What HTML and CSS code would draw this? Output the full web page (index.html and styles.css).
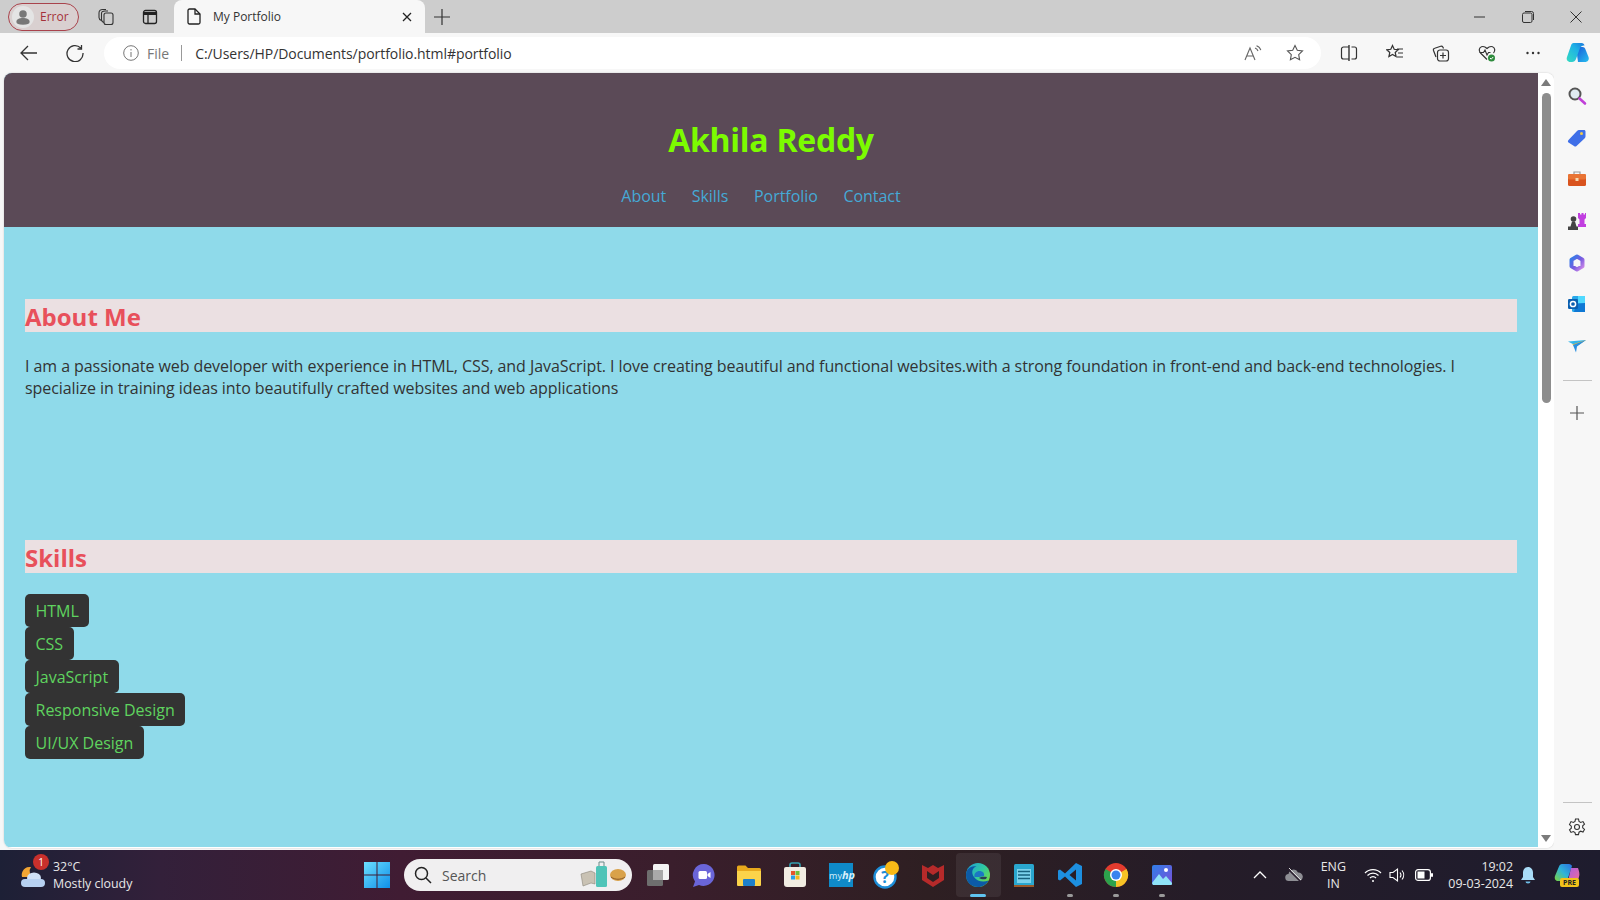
FILE: index.html
```html
<!DOCTYPE html>
<html lang="en">
<head>
<meta charset="utf-8">
<title>My Portfolio</title>
<link rel="stylesheet" href="styles.css">
</head>
<body>
<div class="tabbar">
  <div class="profile">
    <svg width="22" height="22" viewBox="0 0 20 20"><circle cx="10" cy="10" r="10" fill="#e4e4e4"/><circle cx="10" cy="7.200" r="3.400" fill="#777"/><path d="M4 14.500c0-2.500 2.500-3.500 6-3.500s6 1 6 3.500c0 1.500-2 2.500-6 2.500s-6-1-6-2.500z" fill="#777"/></svg>
    <span>Error</span>
  </div>
  <div class="tabicon first"><svg width="18" height="18" viewBox="0 0 18 18" fill="none" stroke="#333" stroke-width="1.100"><rect x="7" y="5" width="9" height="11.500" rx="2"/><path d="M7 14.500c-1.500-.5-2.500-1.500-2.500-3V5.500C4.500 4 6 3 8 3h3M4.500 12.500C3 12 2 11 2 9.500V5c0-2 1.500-3.500 3.500-3.500H9"/></svg></div>
  <div class="tabicon"><svg width="16" height="16" viewBox="0 0 16 16" fill="none" stroke="#222" stroke-width="1.300"><rect x="1.500" y="1.500" width="13" height="13" rx="2"/><path d="M1.500 4.500h13" stroke-width="3"/><path d="M6 5v9"/></svg></div>
  <div class="tab">
    <svg width="14" height="17" viewBox="0 0 14 17" fill="none" stroke="#222" stroke-width="1.300"><path d="M2.500 1h5.500l5 5v8.500a1.500 1.500 0 0 1-1.500 1.500h-9A1.500 1.500 0 0 1 1 14.500v-12A1.500 1.500 0 0 1 2.500 1z"/><path d="M8 1v5h5"/></svg>
    <span class="tabtitle">My Portfolio</span>
    <svg width="10" height="10" viewBox="0 0 10 10" stroke="#222" stroke-width="1.300"><path d="M1 1l8 8M9 1l-8 8"/></svg>
  </div>
  <div class="newtab"><svg width="16" height="16" viewBox="0 0 16 16" stroke="#333" stroke-width="1.200"><path d="M8 0v16M0 8h16"/></svg></div>
  <div class="wincontrols">
    <svg width="12" height="12" viewBox="0 0 12 12" stroke="#333"><path d="M0 6h11"/></svg>
    <svg width="12" height="12" viewBox="0 0 12 12" fill="none" stroke="#333"><rect x=".5" y="2" width="9.500" height="9.500" rx="1.500"/><path d="M3 .5h6.500a2 2 0 0 1 2 2V9"/></svg>
    <svg width="12" height="12" viewBox="0 0 12 12" stroke="#333"><path d="M.5.500l11 11M11.500.500l-11 11"/></svg>
  </div>
</div>

<div class="toolbar">
  <div class="navicon first"><svg width="18" height="16" viewBox="0 0 18 16" fill="none" stroke="#333" stroke-width="1.300"><path d="M17 8H1M8 1L1 8l7 7"/></svg></div>
  <div class="navicon"><svg width="18" height="18" viewBox="0 0 18 18" fill="none" stroke="#333" stroke-width="1.300"><path d="M14.700 4A8 8 0 1 0 17 9M15.500 1v4h-4"/></svg></div>
  <div class="address">
    <svg width="16" height="16" viewBox="0 0 16 16" fill="none" stroke="#777"><circle cx="8" cy="8" r="7.300"/><path d="M8 7v5M8 4v1.500"/></svg>
    <span class="filelabel">File</span>
    <span class="sep"></span>
    <span class="url">C:/Users/HP/Documents/portfolio.html#portfolio</span>
    <span class="addr-right">
      <svg width="18" height="16" viewBox="0 0 18 16" fill="none" stroke="#666" stroke-width="1.100"><path d="M1 15L6 3l5 12M2.800 11h6.500M11 3c1.500.5 2.500 1.500 3 3M12.500.800c2 .7 3.700 2.300 4.300 4.400"/></svg>
      <svg width="18" height="18" viewBox="0 0 18 18" fill="none" stroke="#555" stroke-width="1.100"><path d="M9 1.500l2.300 4.800 5.200.7-3.800 3.600.9 5.200L9 13.300l-4.600 2.500.9-5.200L1.500 7l5.200-.7z"/></svg>
    </span>
  </div>
  <div class="toolicons">
    <svg width="18" height="18" viewBox="0 0 18 18" fill="none" stroke="#333" stroke-width="1.200"><path d="M9 3H3.500a2 2 0 0 0-2 2v8a2 2 0 0 0 2 2H9M11.500 3h3a2 2 0 0 1 2 2v8a2 2 0 0 1-2 2h-3"/><path d="M9 1v16" stroke-width="1.400"/></svg>
    <svg width="18" height="18" viewBox="0 0 18 18" fill="none" stroke="#333" stroke-width="1.200"><path d="M6.500 1.500l1.700 3.800 4 .5-3 2.700.9 4.100-3.600-2.100-3.600 2.100.9-4.100-3-2.700 4-.5zM11 5h6M12 9h5M11 13h6"/></svg>
    <svg width="18" height="18" viewBox="0 0 18 18" fill="none" stroke="#333" stroke-width="1.200"><path d="M4 13L1.500 6.500c-.3-1 .2-2 1.200-2.300l6-2c1-.3 1.800.2 2.300 1l.5 1.300"/><rect x="5.500" y="6" width="11" height="11" rx="2.500"/><path d="M11 8.500v6M8 11.500h6"/></svg>
    <svg width="18" height="18" viewBox="0 0 18 18" fill="none"><path d="M9 15.500L2.500 9C.5 7 1 3.500 3.500 2.700 5.800 2 7.500 3 9 4.500 10.500 3 12.200 2 14.500 2.700 17 3.500 17.500 7 15.500 9" stroke="#333" stroke-width="1.200"/><path d="M1.500 8.500h4l1.500-2.500 2 5 1.500-2.500h2" stroke="#333" stroke-width="1.100"/><circle cx="13.500" cy="14" r="3.500" fill="#2e8b3d"/><path d="M12 14l1.200 1.200 2-2.200" stroke="#fff"/></svg>
    <svg width="18" height="18" viewBox="0 0 18 18" fill="#333"><circle cx="3.500" cy="9" r="1.200"/><circle cx="9" cy="9" r="1.200"/><circle cx="14.500" cy="9" r="1.200"/></svg>
    <svg width="26" height="26" viewBox="0 0 26 26"><defs><linearGradient id="cp1" x1="0" y1="1" x2="1" y2="0"><stop offset="0" stop-color="#35dcc0"/><stop offset=".6" stop-color="#1fb2e6"/><stop offset="1" stop-color="#1a78dd"/></linearGradient><linearGradient id="cp2" x1="0" y1="0" x2="1" y2="1"><stop offset="0" stop-color="#1858d8"/><stop offset="1" stop-color="#28c0f0"/></linearGradient></defs><path d="M11 7h6.500c1.500 0 2.300.8 2.800 2l3.200 8c1 2.700-.8 5-3.500 5H13z" fill="url(#cp2)"/><path d="M8.500 3h8c1.700 0 2.700 1 3 2.500-1.800-.3-3.800.5-4.500 2.500l-4 11c-.7 2-2.200 3-4 3H5.500C2.500 22 1 19.500 2 17L6 5.500C6.400 4 7.300 3 8.500 3z" fill="url(#cp1)"/></svg>
  </div>
</div>

<div class="workspace">
  <div class="viewport">
    <div class="page">
      <header class="site-header">
        <h1>Akhila Reddy</h1>
        <nav class="site-nav">
          <a>About</a><a>Skills</a><a>Portfolio</a><a>Contact</a>
        </nav>
      </header>
      <section class="about">
        <h2>About Me</h2>
        <p>I am a passionate web developer with experience in HTML, CSS, and JavaScript. I love creating beautiful and functional websites.with a strong foundation in front-end and back-end technologies. I specialize in training ideas into beautifully crafted websites and web applications</p>
      </section>
      <section class="skills">
        <h2>Skills</h2>
        <ul>
          <li>HTML</li>
          <li>CSS</li>
          <li>JavaScript</li>
          <li>Responsive Design</li>
          <li>UI/UX Design</li>
        </ul>
      </section>
    </div>
    <div class="scrollbar">
      <div class="arrow up"></div>
      <div class="track"><div class="thumb"></div></div>
      <div class="arrow down"></div>
    </div>
  </div>
  <aside class="sidebar">
    <svg width="20" height="20" viewBox="0 0 20 20" fill="none"><circle cx="8" cy="8" r="5.500" stroke="#555" stroke-width="2" fill="#dfeaf2"/><path d="M12.500 12.500l5.500 5" stroke="#c03fd8" stroke-width="2.600" stroke-linecap="round"/></svg>
    <svg width="20" height="20" viewBox="0 0 20 20"><path d="M1.500 12L10 3c.7-.7 1.300-1 2-1h5c1 0 1.500.6 1.500 1.500v5c0 .8-.3 1.300-1 2l-8 7.500c-.8.700-1.700.700-2.500 0l-5.500-3.500c-.8-.6-.8-1.700 0-2.500z" fill="#3f6fe8"/><circle cx="14.500" cy="5.500" r="1.500" fill="#f0c94a"/></svg>
    <svg width="20" height="20" viewBox="0 0 20 20"><path d="M7 5V3h6v2" fill="none" stroke="#999" stroke-width="1.200"/><rect x="1" y="5" width="18" height="12" rx="1.500" fill="#d9531e"/><rect x="1" y="5" width="18" height="5.500" rx="1.500" fill="#e97434"/><rect x="8.500" y="9" width="3" height="3" fill="#f5d9b0"/></svg>
    <svg width="20" height="20" viewBox="0 0 20 20"><path d="M11 2h2v1.500h1.500V2h2v1.500H18V2h1v5l-1.500 1.500V13H19v3h-8v-3h1.500V8.500L11 7z" fill="#c13fe0"/><circle cx="6.500" cy="8" r="2.800" fill="#444"/><path d="M5 10.500h3l1.500 5H11V19H1v-3.500h2.500z" fill="#444"/></svg>
    <svg width="20" height="20" viewBox="0 0 20 20" fill="none"><defs><linearGradient id="m1" x1="0" y1="0" x2="1" y2="1"><stop offset="0" stop-color="#2f7fe8"/><stop offset=".55" stop-color="#7a5be0"/><stop offset="1" stop-color="#d08ae8"/></linearGradient></defs><path d="M10 3.500l5.500 3.200v6.600L10 16.500l-5.500-3.200V6.700z" stroke="url(#m1)" stroke-width="4" stroke-linejoin="round"/></svg>
    <svg width="20" height="20" viewBox="0 0 20 20"><rect x="5" y="2" width="13" height="16" rx="1.500" fill="#28a8ea"/><rect x="11" y="2" width="7" height="7" fill="#50d9ff"/><path d="M9 10l9-1v9H7z" fill="#0f78d4"/><rect x="1" y="5" width="10" height="10" rx="1.200" fill="#0a5fb0"/><circle cx="6" cy="10" r="2.600" fill="none" stroke="#fff" stroke-width="1.500"/></svg>
    <svg width="20" height="20" viewBox="0 0 20 20"><path d="M1 5.500l18-1.500-9.500 6z" fill="#34b6ea"/><path d="M5 8.500L19 4 9 10.500z" fill="#e8b93f"/><path d="M6 9l13-5-9 6.500-1 6z" fill="#2a8fe0"/></svg>
    <div class="side-rule top"></div>
    <svg class="side-plus" width="14" height="14" viewBox="0 0 14 14" stroke="#555" stroke-width="1.200"><path d="M7 0v14M0 7h14"/></svg>
    <div class="side-rule bottom"></div>
    <svg class="side-gear" width="18" height="18" viewBox="0 0 18 18" fill="none" stroke="#333" stroke-width="1.100"><circle cx="9" cy="9" r="2.500"/><path d="M7.500 1h3l.5 2.400 1.700 1 2.300-.8 1.500 2.600-1.800 1.600v2l1.800 1.600-1.500 2.600-2.300-.8-1.700 1-.5 2.400h-3L7 14.600l-1.700-1-2.300.8-1.500-2.600 1.800-1.600v-2L1.500 6.600 3 3.600l2.300.8 1.700-1z"/></svg>
  </aside>
</div>

<footer class="taskbar">
  <div class="weather">
    <svg width="30" height="30" viewBox="0 0 30 30"><path d="M4 17a8 8 0 0 1 9-10 7 7 0 0 0 2 10z" fill="#f2a533"/><ellipse cx="16" cy="18" rx="7" ry="5.500" fill="#cfe0f7"/><rect x="3" y="19" width="24" height="8" rx="4" fill="#b7d1f2"/></svg>
    <span class="weather-badge">1</span>
    <div class="weather-text"><span>32°C</span><span>Mostly cloudy</span></div>
  </div>
  <div class="winstart"><svg width="26" height="26" viewBox="0 0 26 26"><defs><linearGradient id="w1" x1="0" y1="0" x2="1" y2="1"><stop offset="0" stop-color="#6ce0ff"/><stop offset="1" stop-color="#0f8fe8"/></linearGradient></defs><path d="M0 0h12.500v12.500H0zM13.500 0H26v12.500H13.500zM0 13.500h12.500V26H0zM13.500 13.500H26V26H13.500z" fill="url(#w1)"/></svg></div>
  <div class="searchbox">
    <svg width="18" height="18" viewBox="0 0 18 18" fill="none" stroke="#222" stroke-width="1.500"><circle cx="7.500" cy="7.500" r="6"/><path d="M12 12l5 5"/></svg>
    <span>Search</span>
    <span class="search-art">
      <svg width="48" height="30" viewBox="0 0 48 30"><path d="M1 14l10-3 4 2v11l-4-1-8 3z" fill="#c9c2b4" stroke="#8a8478" stroke-width=".6"/><rect x="16" y="6" width="11" height="21" rx="1.500" fill="#4fc4b8"/><path d="M19 6V2h5v4" fill="none" stroke="#6a8a88"/><ellipse cx="38" cy="15" rx="8" ry="6" fill="#d9a24a"/><path d="M31 17c4 3 10 3 14 0" stroke="#8a5a2a" fill="none"/></svg>
    </span>
  </div>
  <div class="apps">
    <div class="app"><svg width="24" height="24" viewBox="0 0 24 24"><rect x="7" y="1" width="16" height="16" rx="1.500" fill="#f3f3f3"/><rect x="1" y="7" width="16" height="16" rx="1.500" fill="#6e6e6e"/><rect x="7" y="7" width="10" height="10" fill="#a9a9a9"/></svg></div>
    <div class="app"><svg width="24" height="26" viewBox="0 0 24 26"><path d="M12 2a11 11 0 1 1-5 21l-6 2 2-5.500A11 11 0 0 1 12 2z" fill="#6a65d8"/><rect x="6.500" y="9" width="8.500" height="8" rx="1.500" fill="#fff"/><path d="M15.500 12l3-2v6l-3-2z" fill="#fff"/></svg></div>
    <div class="app"><svg width="26" height="24" viewBox="0 0 26 24"><path d="M1 4a1.500 1.500 0 0 1 1.500-1.500h7l2.500 2.500h11.500A1.500 1.500 0 0 1 25 6.500V22H1z" fill="#e8a91c"/><path d="M1 8h24v14a1 1 0 0 1-1 1H2a1 1 0 0 1-1-1z" fill="#fbd34a"/><rect x="7" y="16" width="12" height="7" rx="1" fill="#1d7fc9"/></svg></div>
    <div class="app"><svg width="24" height="26" viewBox="0 0 24 26"><path d="M7 6V3a2 2 0 0 1 2-2h6a2 2 0 0 1 2 2v3" fill="none" stroke="#33a0b0" stroke-width="1.600"/><path d="M1 7a2 2 0 0 1 2-2h18a2 2 0 0 1 2 2v15a3 3 0 0 1-3 3H4a3 3 0 0 1-3-3z" fill="#f1ece2"/><rect x="8" y="9" width="4" height="4" fill="#e8532a"/><rect x="12.500" y="9" width="4" height="4" fill="#6fbf3a"/><rect x="8" y="13.500" width="4" height="4" fill="#2a9fe8"/><rect x="12.500" y="13.500" width="4" height="4" fill="#f5b81e"/></svg></div>
    <div class="app"><div class="myhp">my<i>hp</i></div></div>
    <div class="app"><svg width="30" height="30" viewBox="0 0 30 30"><circle cx="13" cy="17" r="10.500" fill="#fff" stroke="#1d8ed8" stroke-width="2.400"/><text x="13" y="23" class="helpmark">?</text><circle cx="20" cy="8" r="7" fill="#f7b917"/></svg></div>
    <div class="app"><svg width="24" height="26" viewBox="0 0 24 26"><path d="M1 3l6 3 5-3 5 3 6-3v15l-11 7L1 18zM6 9v7l6 4 6-4V9l-6 4z" fill="#b62a2a" fill-rule="evenodd"/></svg></div>
    <div class="app active"><svg width="26" height="26" viewBox="0 0 26 26"><defs><linearGradient id="e1" x1="0" y1="0" x2="1" y2=".8"><stop offset="0" stop-color="#1f9ed8"/><stop offset=".55" stop-color="#2fc9a0"/><stop offset="1" stop-color="#7bdc3a"/></linearGradient></defs><circle cx="13" cy="13" r="12" fill="url(#e1)"/><path d="M1 13C1 7 6 3 11.500 4.500 7 5.500 6 11 9 15c3 4.500 9.500 5.500 14.500 3.500C21.500 22.500 17.500 25 13 25 6 25 1 20 1 13z" fill="#0c5aa6"/><path d="M9.500 15c-1-4 2.500-6.500 6-6 3 .5 4 2.500 3.500 5-3 1-7 1-9.500 1z" fill="#1c76c4"/><path d="M14 16c2-1.500 5-1.500 8-1l-1 2c-2 .5-5 .5-7-1z" fill="#2a3f52"/></svg><span class="running wide"></span></div>
    <div class="app"><svg width="22" height="26" viewBox="0 0 22 26"><rect x="1" y="2" width="20" height="23" rx="1.500" fill="#2aa7cf"/><rect x="1" y="23" width="20" height="2" fill="#9a5a2a"/><rect x="4" y="7" width="14" height="14" fill="#7bd2ec"/><path d="M5 9.500h12M5 13h12M5 16.500h12" stroke="#16627e" stroke-width="1.400"/></svg></div>
    <div class="app"><svg width="26" height="26" viewBox="0 0 26 26"><path d="M19 1l6 3v18l-6 3L8 14.500 3 18.500 1 17.500v-9L3 7.500l5 4zM19 7.500L12.500 13l6.500 5.500z" fill="#1d8fe0" fill-rule="evenodd"/></svg><span class="running"></span></div>
    <div class="app"><svg width="26" height="26" viewBox="0 0 26 26"><circle cx="13" cy="13" r="12" fill="#e33b2e"/><path d="M13 13L23.500 7A12 12 0 0 1 13 25z" fill="#f7c325"/><path d="M13 13L13 25A12 12 0 0 1 2.500 7z" fill="#2ca24c"/><circle cx="13" cy="13" r="6" fill="#fff"/><circle cx="13" cy="13" r="4.500" fill="#3a83ee"/></svg><span class="running"></span></div>
    <div class="app"><svg width="24" height="24" viewBox="0 0 24 24"><defs><linearGradient id="p1" x1="0" y1="0" x2="1" y2="1"><stop offset="0" stop-color="#2f7fe8"/><stop offset="1" stop-color="#7a4fd8"/></linearGradient></defs><rect x="2" y="2" width="20" height="20" rx="2" fill="url(#p1)"/><path d="M2 20l7-9 4 5 3-3 6 7v1a1 1 0 0 1-1 1H3z" fill="#8fe3f7"/><circle cx="16" cy="7" r="2" fill="#fff"/></svg><span class="running"></span></div>
  </div>
  <div class="tray">
    <svg width="14" height="14" viewBox="0 0 14 14" fill="none" stroke="#fff" stroke-width="1.300"><path d="M1 10l6-6 6 6"/></svg>
    <svg class="tray-cloud" width="18" height="14" viewBox="0 0 18 14"><path d="M4 13a3.500 3.500 0 0 1-.5-7A5 5 0 0 1 13 4.500 4 4 0 0 1 14 13z" fill="#8e8e94"/><path d="M3 1l12 12" stroke="#2a1e2e" stroke-width="1.500"/><path d="M4 0l12 12" stroke="#ddd"/></svg>
    <div class="lang"><span>ENG</span><span>IN</span></div>
    <svg width="18" height="16" viewBox="0 0 18 16" fill="none" stroke="#fff" stroke-width="1.200"><path d="M1 6a11 11 0 0 1 16 0M3.500 8.500a7.500 7.500 0 0 1 11 0M6 11a4 4 0 0 1 6 0"/><circle cx="9" cy="14" r="1" fill="#fff" stroke="none"/></svg>
    <svg width="18" height="16" viewBox="0 0 18 16" fill="none" stroke="#fff" stroke-width="1.100"><path d="M1 5.500h3L8.500 2v12L4 10.500H1zM11 5.500a4 4 0 0 1 0 5M13 3.500a7 7 0 0 1 0 9"/></svg>
    <svg class="battery" width="18" height="12" viewBox="0 0 18 12"><rect x=".6" y=".6" width="14.800" height="10.800" rx="2.500" fill="none" stroke="#fff" stroke-width="1.200"/><rect x="2.500" y="2.500" width="7" height="7" fill="#fff"/><rect x="16" y="4" width="2" height="4" rx="1" fill="#fff"/></svg>
    <div class="clock"><span>19:02</span><span>09-03-2024</span></div>
    <svg width="16" height="18" viewBox="0 0 16 18"><path d="M8 1c3 0 5 2.500 5 5.500V11l2 3H1l2-3V6.500C3 3.500 5 1 8 1z" fill="#a9dcf7"/><path d="M5.500 15.500a2.500 2 0 0 0 5 0z" fill="#6fbde8"/></svg>
    <div class="copilot-pre">
      <svg width="26" height="20" viewBox="0 0 26 20"><defs><linearGradient id="c3" x1="0" y1="1" x2="1" y2="0"><stop offset="0" stop-color="#7dd63a"/><stop offset=".5" stop-color="#2fb4d8"/><stop offset="1" stop-color="#2a6fe0"/></linearGradient><linearGradient id="c4" x1="0" y1="0" x2="1" y2="1"><stop offset="0" stop-color="#a95fe0"/><stop offset="1" stop-color="#f06a9a"/></linearGradient></defs><path d="M8 1h7c1.500 0 2.500 1 3 2l-5 15H4c-2 0-4-2-3-5L5 3.500C5.500 2 6.500 1 8 1z" fill="url(#c3)"/><path d="M17 5l7 0c1 3 2 6 1 9-.5 2-2 4-4 4h-7z" fill="url(#c4)"/></svg>
      <span class="pre">PRE</span>
    </div>
  </div>
</footer>
</body>
</html>
```
FILE: styles.css
```css
* { box-sizing: border-box; }
html, body { margin: 0; height: 100%; }
body {
  width: 1600px;
  height: 900px;
  overflow: hidden;
  display: flex;
  flex-direction: column;
  font-family: "Open Sans", "Noto Sans", sans-serif;
  background: #f7f7f7;
}
svg { flex: none; display: block; }

/* tab strip */
.tabbar {
  height: 33px;
  background: #cdcdcd;
  display: flex;
  align-items: center;
  padding-left: 8px;
  flex: none;
}
.profile {
  width: 71px;
  height: 28px;
  border: 1.500px solid #a9434c;
  border-radius: 14px;
  background: #d9d0d0;
  display: flex;
  align-items: center;
  gap: 6px;
  padding-left: 3px;
  font-size: 12px;
  color: #a5303a;
}
.tabicon { width: 44px; display: flex; justify-content: center; }
.tabicon.first { margin-left: 5px; }
.tab {
  width: 251px;
  height: 33px;
  background: #f7f7f7;
  border-radius: 8px 8px 0 0;
  display: flex;
  align-items: center;
  padding: 0 13px;
  font-size: 12px;
  color: #333;
  gap: 12px;
  margin-left: 2px;
}
.tabtitle { flex: 1; }
.newtab { margin-left: 9px; }
.wincontrols {
  margin-left: auto;
  display: flex;
  gap: 36px;
  padding-right: 18px;
}

/* toolbar */
.toolbar {
  height: 40px;
  flex: none;
  background: #f7f7f7;
  display: flex;
  align-items: center;
}
.navicon { width: 46px; display: flex; justify-content: center; }
.navicon.first { margin-left: 6px; }
.address {
  width: 1217px;
  height: 32px;
  margin-left: 6px;
  background: #fff;
  border-radius: 16px;
  display: flex;
  align-items: center;
  padding: 0 17px 0 19px;
  font-size: 14px;
  color: #333;
}
.filelabel { color: #777; margin-left: 8px; }
.sep { width: 1px; height: 16px; background: #999; margin: 0 13px 0 12px; }
.url { letter-spacing: -.06px; }
.addr-right { margin-left: auto; display: flex; gap: 24px; align-items: center; }
.toolicons {
  display: flex;
  align-items: center;
  gap: 28px;
  margin-left: 19px;
}
.toolicons svg:last-child { margin-left: -5px; }

/* page */
.workspace { flex: 1; display: flex; min-height: 0; }
.viewport {
  width: 1550px;
  height: 775px;
  margin-left: 4px;
  display: flex;
  background: #fff;
  border-radius: 8px;
  overflow: hidden;
  box-shadow: 0 0 2px rgba(0,0,0,.2);
}
.page {
  width: 1534px;
  height: 774px;
  background: #8fdaea;
  overflow: hidden;
}
.site-header {
  height: 154px;
  background: #5b4a57;
  text-align: center;
  padding-top: 43px;
}
h1 {
  margin: 0;
  font-size: 32px;
  line-height: 48px;
  letter-spacing: -.27px;
  color: #7cfc00;
  font-weight: 700;
}
.site-nav {
  display: flex;
  justify-content: center;
  gap: 25.500px;
  margin-top: 20px;
  padding-right: 20px;
  font-size: 16px;
  line-height: 24px;
  letter-spacing: -.03px;
  color: #45a9d6;
}
h2 {
  margin: 0;
  background: #ebe0e2;
  color: #e8505b;
  font-size: 24px;
  line-height: 35px;
  height: 33px;
  font-weight: 700;
}
.about { margin: 72px 21px 0; height: 241px; }
.about p {
  margin: 22.500px 0 0;
  font-size: 16px;
  line-height: 22.500px;
  letter-spacing: -.07px;
  color: #333;
}
.skills { margin: 0 21px; }
.skills ul {
  list-style: none;
  margin: 21px 0 0;
  padding: 0;
  display: flex;
  flex-direction: column;
  align-items: flex-start;
}
.skills li {
  height: 33px;
  padding: 0 10.500px;
  background: #333;
  border-radius: 5px;
  color: #5fd35f;
  font-size: 16px;
  line-height: 35px;
}
.skills li + li { margin-top: -.1px; }
.scrollbar {
  width: 16px;
  display: flex;
  flex-direction: column;
  align-items: center;
  padding: 6px 0;
  background: #fff;
}
.arrow { width: 0; height: 0; border-left: 5.500px solid transparent; border-right: 5.500px solid transparent; }
.arrow.up { border-bottom: 7px solid #7b7b7b; }
.arrow.down { border-top: 7px solid #7b7b7b; }
.track { flex: 1; width: 100%; padding-top: 7px; }
.thumb { width: 9px; height: 310px; background: #8d8d8d; border-radius: 5px; margin: 0 auto; }

/* right rail */
.sidebar {
  flex: 1;
  height: 775px;
  background: #f7f7f7;
  display: flex;
  flex-direction: column;
  align-items: center;
  padding-top: 13px;
  gap: 21.700px;
}
.side-rule { width: 29px; height: 1px; background: #c4c4c4; flex: none; }
.side-rule.top { margin-top: 2px; margin-bottom: 3px; }
.side-rule.bottom { margin-top: auto; margin-bottom: -7px; }
.side-gear { margin-bottom: 12px; }

/* taskbar */
.taskbar {
  height: 50px;
  margin-top: 2px;
  flex: none;
  display: flex;
  align-items: center;
  background: linear-gradient(90deg, #1d2036 0, #33203a 10%, #401c33 25%, #3a1e2c 42%, #2e1f22 58%, #251c28 75%, #1e1c2e 100%);
  color: #fff;
}
.weather {
  display: flex;
  align-items: center;
  width: 364px;
  padding-left: 18px;
  position: relative;
}
.weather-badge {
  position: absolute;
  left: 33px;
  top: -4px;
  width: 16px;
  height: 16px;
  border-radius: 50%;
  background: #c9302c;
  font-size: 10px;
  line-height: 16px;
  text-align: center;
}
.weather-text {
  display: flex;
  flex-direction: column;
  margin-left: 5px;
  font-size: 12.400px;
  line-height: 17px;
  color: #e8e8e8;
}
.winstart { width: 40px; }
.searchbox {
  width: 228px;
  height: 32px;
  border-radius: 16px;
  background: #f0eff0;
  display: flex;
  align-items: center;
  padding: 0 4px 0 10px;
  color: #555;
  font-size: 14px;
  gap: 10px;
}
.search-art { margin-left: auto; }
.apps { display: flex; margin-left: 3px; }
.app {
  width: 45.800px;
  height: 44px;
  display: flex;
  align-items: center;
  justify-content: center;
  position: relative;
}
.app.active { background: rgba(255,255,255,.07); border-radius: 4px; }
.myhp {
  width: 24px;
  height: 24px;
  background: #0f8ac8;
  color: #d8f0fa;
  font-size: 9px;
  line-height: 24px;
  text-align: center;
}
.myhp i { font-weight: 700; font-size: 11px; }
.helpmark { font-size: 16px; font-weight: 700; fill: #1d8ed8; text-anchor: middle; }
.running {
  position: absolute;
  bottom: 0;
  left: 50%;
  width: 6px;
  height: 3px;
  margin-left: -3px;
  border-radius: 2px;
  background: #9a9a9a;
}
.running.wide { width: 16px; margin-left: -8px; background: #60c5f1; }
.tray {
  margin-left: auto;
  display: flex;
  align-items: center;
  padding-right: 20px;
  font-size: 12.400px;
  color: #e8e8e8;
  gap: 7px;
}
.tray-cloud { margin-left: 11px; }
.lang { display: flex; flex-direction: column; align-items: center; line-height: 17px; width: 38px; margin: 0 5px 0 4px; }
.battery { margin-left: 1px; }
.clock { display: flex; flex-direction: column; align-items: flex-end; line-height: 17px; margin-left: 8px; }
.copilot-pre { position: relative; width: 26px; margin-left: 11px; margin-top: -5px; }
.pre {
  position: absolute;
  left: 6px;
  top: 15px;
  width: 19px;
  height: 9px;
  background: #f2c21a;
  color: #222;
  font-size: 7px;
  line-height: 9px;
  font-weight: 700;
  text-align: center;
  border-radius: 2px;
}
```
